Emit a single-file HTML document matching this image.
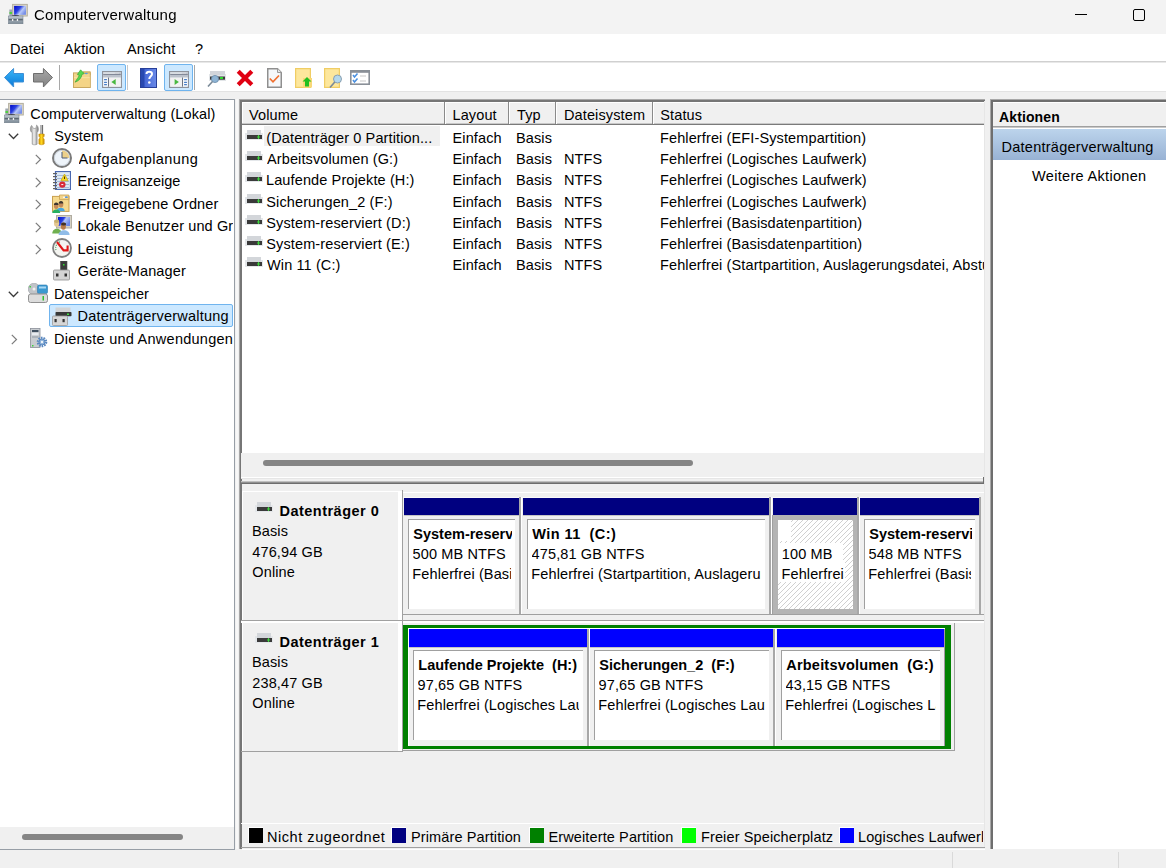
<!DOCTYPE html>
<html><head><meta charset="utf-8"><style>
html,body{margin:0;padding:0;}
body{width:1166px;height:868px;position:relative;overflow:hidden;background:#f0f0f0;font-family:"Liberation Sans",sans-serif;color:#000;}
.t{position:absolute;white-space:pre;letter-spacing:0.12px;}
.r{position:absolute;}
svg{position:absolute;}
</style></head><body>
<div class="r" style="left:0px;top:0px;width:1166px;height:34px;background:#f3f3f3;"></div>
<svg style="left:6px;top:2px" width="22" height="22" viewBox="0 0 22 22"><defs><linearGradient id="cmt" x1="0" y1="0" x2="1" y2="0.6"><stop offset="0" stop-color="#0008c8"/><stop offset="0.45" stop-color="#2a40e0"/><stop offset="0.7" stop-color="#b8c8f8"/><stop offset="1" stop-color="#7890e8"/></linearGradient><linearGradient id="cbt" x1="0" y1="0" x2="0" y2="1"><stop offset="0" stop-color="#c4ccd4"/><stop offset="1" stop-color="#7c8a96"/></linearGradient></defs><rect x="6.6" y="2.4" width="14.7" height="11.6" fill="#dcd8c8" stroke="#b4b0a0" stroke-width="1"/><rect x="8.1" y="3.9" width="11.9" height="8.9" fill="url(#cmt)"/><rect x="3.3" y="7.5" width="2.8" height="6.5" fill="#a0a8b0"/><rect x="3.5" y="10" width="2.5" height="2" fill="#50d040"/><ellipse cx="9.5" cy="13.8" rx="3.6" ry="0.9" fill="#383848"/><rect x="2.4" y="14" width="14.6" height="7.8" fill="url(#cbt)" stroke="#6e7a86" stroke-width="0.5"/><rect x="2.6" y="16.8" width="14.2" height="1.6" fill="#5c6872"/><rect x="6" y="17" width="1.3" height="2" fill="#f0f0f0"/><rect x="10.8" y="17" width="1.3" height="2" fill="#f0f0f0"/></svg>
<div class="t" style="left:34.3px;top:5.04px;font-size:15px;line-height:20px;will-change:transform;letter-spacing:0.24px;">Computerverwaltung</div>
<div class="r" style="left:1075px;top:14px;width:12px;height:1px;background:#000;"></div>
<div class="r" style="left:1133px;top:9px;width:10px;height:10px;border:1px solid #000;border-radius:2px"></div>
<div class="r" style="left:0px;top:34px;width:1166px;height:27px;background:#fff;"></div>
<div class="t" style="left:10px;top:39.21px;font-size:14.5px;line-height:20px;">Datei</div>
<div class="t" style="left:64px;top:39.21px;font-size:14.5px;line-height:20px;">Aktion</div>
<div class="t" style="left:127px;top:39.21px;font-size:14.5px;line-height:20px;">Ansicht</div>
<div class="t" style="left:195px;top:39.21px;font-size:14.5px;line-height:20px;">?</div>
<div class="r" style="left:0px;top:61px;width:1166px;height:1px;background:#d0d0d0;"></div>
<div class="r" style="left:0px;top:62px;width:1166px;height:1px;background:#e8e8e8;"></div>
<div class="r" style="left:0px;top:63px;width:1166px;height:28px;background:#fff;"></div>
<div class="r" style="left:0px;top:91px;width:1166px;height:1px;background:#e3e3e3;"></div>
<div class="r" style="left:0px;top:92px;width:1166px;height:7px;background:#f0f0f0;"></div>
<div class="r" style="left:59px;top:65px;width:1px;height:25px;background:#a8a8a8;"></div>
<div class="r" style="left:127px;top:65px;width:1px;height:25px;background:#c8c8c8;"></div>
<div class="r" style="left:194px;top:65px;width:1px;height:25px;background:#a8a8a8;"></div>
<div class="r" style="left:97px;top:64px;width:27px;height:25px;background:#cce8ff;border:1px solid #6fb4ee;border-radius:2px"></div>
<div class="r" style="left:164px;top:64px;width:27px;height:25px;background:#cce8ff;border:1px solid #6fb4ee;border-radius:2px"></div>
<svg style="left:4px;top:68px" width="20" height="20" viewBox="0 0 20 20"><defs><linearGradient id="ba" x1="0" y1="0" x2="0" y2="1"><stop offset="0" stop-color="#3cb8f8"/><stop offset="1" stop-color="#0a78d8"/></linearGradient></defs><path d="M0.5 9.5 L9.6 0.5 L9.6 5.5 L19.5 5.5 L19.5 14 L9.6 14 L9.6 19 Z" fill="url(#ba)" stroke="#3d8fd6" stroke-width="1"/></svg>
<svg style="left:33px;top:68px" width="20" height="20" viewBox="0 0 20 20"><defs><linearGradient id="fa" x1="0" y1="0" x2="0" y2="1"><stop offset="0" stop-color="#a8a8a8"/><stop offset="1" stop-color="#828282"/></linearGradient></defs><path d="M19.5 9.5 L10.4 0.5 L10.4 5.5 L0.5 5.5 L0.5 14 L10.4 14 L10.4 19 Z" fill="url(#fa)" stroke="#6e6e6e" stroke-width="1"/></svg>
<svg style="left:73px;top:68px" width="18" height="20" viewBox="0 0 18 20"><path d="M10 3.7 H17.3 V7 H10 Z" fill="#f2d58e" stroke="#c9a55a" stroke-width="0.8"/><rect x="0.5" y="4.9" width="16.8" height="14.6" fill="#f3d58c" stroke="#c9a860" stroke-width="1"/><rect x="1" y="9.3" width="15.8" height="1" fill="#fbe6a8"/><rect x="1" y="10.3" width="15.8" height="8.7" fill="#f4d486"/><ellipse cx="13.3" cy="5.5" rx="1.6" ry="0.8" fill="#5a9ee0"/><path d="M2 14.2 C3.5 11.5 5.5 9.5 6.2 7.2 L4.3 6.6 L7.6 1.8 L11.2 5.6 L9 6.4 C8.5 10 6 12.8 2 14.2 Z" fill="#58d850" stroke="#30a030" stroke-width="0.6"/></svg>
<svg style="left:102px;top:71px" width="20" height="17" viewBox="0 0 20 17"><rect x="0.6" y="0.6" width="18.8" height="15.8" fill="#e4e8ee" stroke="#8e939c" stroke-width="1.2"/><rect x="1.2" y="1.2" width="17.6" height="5.4" fill="#c8ccd4"/><rect x="1.4" y="1.7" width="11.5" height="1.1" fill="#eef0f4"/><rect x="13.5" y="1.7" width="1" height="1.1" fill="#f0f0f0"/><rect x="15.5" y="1.7" width="1" height="1.1" fill="#f0f0f0"/><rect x="1.2" y="2.9" width="17.6" height="0.9" fill="#6a7282"/><rect x="1.2" y="3.9" width="17.6" height="2.5" fill="#bcc2cc"/><rect x="1.2" y="6.6" width="4.8" height="9" fill="#f6f8fa"/><rect x="6" y="6.6" width="1" height="9" fill="#6d7584"/><rect x="7" y="6.6" width="11.8" height="9" fill="#f2f2f2"/><rect x="2" y="8.1" width="3" height="1.1" rx="0.5" fill="#4a7fc8"/><rect x="2" y="10.8" width="3" height="1.1" rx="0.5" fill="#4a7fc8"/><rect x="2" y="13.1" width="3" height="1.1" rx="0.5" fill="#4a7fc8"/><path d="M9.4 11 L13.7 8 L13.7 14 Z" fill="#48b840"/></svg>
<svg style="left:140px;top:68px" width="17" height="20" viewBox="0 0 17 20"><defs><linearGradient id="hb" x1="0" y1="0" x2="1" y2="0"><stop offset="0" stop-color="#3a5cd0"/><stop offset="1" stop-color="#6a8ae8"/></linearGradient></defs><rect x="0.5" y="0.5" width="16" height="19" fill="url(#hb)" stroke="#28409a" stroke-width="1"/><rect x="1" y="1" width="3.5" height="18" fill="#2848b0"/><path d="M6.5 6 C6.5 3 12 3 12 6 C12 8 9.3 8.5 9.3 11" fill="none" stroke="#fff" stroke-width="2"/><circle cx="9.3" cy="14.5" r="1.3" fill="#fff"/></svg>
<svg style="left:169px;top:71px" width="20" height="17" viewBox="0 0 20 17"><rect x="0.6" y="0.6" width="18.8" height="15.8" fill="#e4e8ee" stroke="#8e939c" stroke-width="1.2"/><rect x="1.2" y="1.2" width="17.6" height="5.4" fill="#c8ccd4"/><rect x="1.4" y="1.7" width="11.5" height="1.1" fill="#eef0f4"/><rect x="13.5" y="1.7" width="1" height="1.1" fill="#f0f0f0"/><rect x="15.5" y="1.7" width="1" height="1.1" fill="#f0f0f0"/><rect x="1.2" y="2.9" width="17.6" height="0.9" fill="#6a7282"/><rect x="1.2" y="3.9" width="17.6" height="2.5" fill="#bcc2cc"/><rect x="14" y="6.6" width="4.8" height="9" fill="#f6f8fa"/><rect x="13" y="6.6" width="1" height="9" fill="#6d7584"/><rect x="1.2" y="6.6" width="11.8" height="9" fill="#f2f2f2"/><rect x="15" y="8.1" width="3" height="1.1" rx="0.5" fill="#4a7fc8"/><rect x="15" y="10.8" width="3" height="1.1" rx="0.5" fill="#4a7fc8"/><rect x="15" y="13.1" width="3" height="1.1" rx="0.5" fill="#4a7fc8"/><path d="M5.6 8 L9.9 11 L5.6 14 Z" fill="#48b840"/></svg>
<svg style="left:207px;top:71px" width="19" height="17" viewBox="0 0 19 17"><rect x="2" y="3" width="17" height="7" fill="#e2e5e8"/><rect x="3" y="0" width="15" height="4" fill="#d2d5da"/><rect x="3" y="5.5" width="15" height="3.2" fill="#3a3a3a"/><rect x="13" y="6" width="3" height="2" fill="#30d830"/><circle cx="8" cy="8" r="3.6" fill="#8eb4d4" stroke="#6a8aa8" stroke-width="0.8"/><path d="M5.5 10.5 L1 15.5" stroke="#7a8a98" stroke-width="1.6"/></svg>
<svg style="left:236.3px;top:68.6px" width="18" height="18" viewBox="0 0 18 18"><path d="M2.2 2.2 L15.8 15.8 M15.8 2.2 L2.2 15.8" stroke="#e00012" stroke-width="4.2"/></svg>
<svg style="left:267px;top:68px" width="15" height="20" viewBox="0 0 15 20"><path d="M0.75 0.75 H10.5 L14.25 4.5 V19.25 H0.75 Z" fill="#f6f8fa" stroke="#8f8f8f" stroke-width="1.5"/><path d="M10.5 0.75 V4.5 H14.25" fill="#e8e8e8" stroke="#9a9a9a" stroke-width="1"/><path d="M2.8 10.5 L6 13.8 L12 7.5" fill="none" stroke="#f07030" stroke-width="1.7"/></svg>
<svg style="left:295px;top:68px" width="17" height="20" viewBox="0 0 17 20"><rect x="0.6" y="0.6" width="14.8" height="18.8" fill="#fde79c" stroke="#f0cd64" stroke-width="1.2"/><rect x="8" y="10" width="9" height="9.5" fill="#f8d878"/><path d="M7.5 13.5 L12 9 L16.5 13.5 L14 13.5 L14 18.5 L10 18.5 L10 13.5 Z" fill="#20c020"/></svg>
<svg style="left:324px;top:68px" width="18" height="20" viewBox="0 0 18 20"><rect x="0.6" y="0.6" width="14.8" height="18.8" fill="#fde79c" stroke="#f0cd64" stroke-width="1.2"/><circle cx="13.5" cy="11" r="4" fill="#b4d8ec" stroke="#8aa0b0" stroke-width="1"/><path d="M10.8 14 L6 19.5" stroke="#7a8a98" stroke-width="1.6"/></svg>
<svg style="left:350px;top:70px" width="20" height="15" viewBox="0 0 20 15"><rect x="0.8" y="0.8" width="18.4" height="13.4" fill="#fff" stroke="#8a9098" stroke-width="1.6"/><rect x="0.8" y="0.8" width="18.4" height="2" fill="#8a9098"/><path d="M3 5 L4.5 7 L7.5 3.5" fill="none" stroke="#4a90e0" stroke-width="1.6"/><path d="M3 10 L4.5 12 L7.5 8.5" fill="none" stroke="#4a90e0" stroke-width="1.6"/><rect x="10" y="5.5" width="6" height="1" fill="#c8c8c8"/><rect x="10" y="10.5" width="6" height="1" fill="#c8c8c8"/></svg>
<div class="r" style="left:0px;top:99px;width:235px;height:751px;background:#979ea6;"></div>
<div class="r" style="left:0px;top:100px;width:234px;height:749px;background:#fff;"></div>
<div class="r" style="left:0px;top:827px;width:234px;height:22px;background:#f0f0f0;"></div>
<div class="r" style="left:22px;top:834px;width:161px;height:6px;background:#858585;border-radius:3px"></div>
<div class="r" style="left:49px;top:304px;width:182px;height:21px;background:#cce8ff;border:1px solid #70b4ee;border-radius:2px"></div>
<div class="t" style="left:30.3px;top:103.71px;font-size:14.5px;line-height:20px;width:202.7px;overflow:hidden;">Computerverwaltung (Lokal)</div>
<div class="t" style="left:54.3px;top:126.21px;font-size:14.5px;line-height:20px;width:178.7px;overflow:hidden;">System</div>
<div class="t" style="left:78.5px;top:148.71px;font-size:14.5px;line-height:20px;width:154.5px;overflow:hidden;letter-spacing:0.4px;">Aufgabenplanung</div>
<div class="t" style="left:77.5px;top:171.21px;font-size:14.5px;line-height:20px;width:155.5px;overflow:hidden;letter-spacing:-0.02px;">Ereignisanzeige</div>
<div class="t" style="left:77.5px;top:193.71px;font-size:14.5px;line-height:20px;width:155.5px;overflow:hidden;">Freigegebene Ordner</div>
<div class="t" style="left:77.5px;top:216.21px;font-size:14.5px;line-height:20px;width:155.5px;overflow:hidden;">Lokale Benutzer und Gruppen</div>
<div class="t" style="left:77.5px;top:238.71px;font-size:14.5px;line-height:20px;width:155.5px;overflow:hidden;">Leistung</div>
<div class="t" style="left:77.8px;top:261.21px;font-size:14.5px;line-height:20px;width:155.2px;overflow:hidden;">Geräte-Manager</div>
<div class="t" style="left:54px;top:283.71px;font-size:14.5px;line-height:20px;width:179px;overflow:hidden;">Datenspeicher</div>
<div class="t" style="left:77.5px;top:306.21px;font-size:14.5px;line-height:20px;width:155.5px;overflow:hidden;letter-spacing:0.22px;">Datenträgerverwaltung</div>
<div class="t" style="left:54px;top:328.71px;font-size:14.5px;line-height:20px;width:179px;overflow:hidden;letter-spacing:0.25px;">Dienste und Anwendungen</div>
<svg style="left:2px;top:101px" width="22" height="22" viewBox="0 0 22 22"><defs><linearGradient id="cmr" x1="0" y1="0" x2="1" y2="0.6"><stop offset="0" stop-color="#0008c8"/><stop offset="0.45" stop-color="#2a40e0"/><stop offset="0.7" stop-color="#b8c8f8"/><stop offset="1" stop-color="#7890e8"/></linearGradient><linearGradient id="cbr" x1="0" y1="0" x2="0" y2="1"><stop offset="0" stop-color="#c4ccd4"/><stop offset="1" stop-color="#7c8a96"/></linearGradient></defs><rect x="6.6" y="2.4" width="14.7" height="11.6" fill="#dcd8c8" stroke="#b4b0a0" stroke-width="1"/><rect x="8.1" y="3.9" width="11.9" height="8.9" fill="url(#cmr)"/><rect x="3.3" y="7.5" width="2.8" height="6.5" fill="#a0a8b0"/><rect x="3.5" y="10" width="2.5" height="2" fill="#50d040"/><ellipse cx="9.5" cy="13.8" rx="3.6" ry="0.9" fill="#383848"/><rect x="2.4" y="14" width="14.6" height="7.8" fill="url(#cbr)" stroke="#6e7a86" stroke-width="0.5"/><rect x="2.6" y="16.8" width="14.2" height="1.6" fill="#5c6872"/><rect x="6" y="17" width="1.3" height="2" fill="#f0f0f0"/><rect x="10.8" y="17" width="1.3" height="2" fill="#f0f0f0"/></svg>
<svg style="left:28px;top:123px" width="18" height="23" viewBox="0 0 18 23"><defs><linearGradient id="wr" x1="0" y1="0" x2="1" y2="0"><stop offset="0" stop-color="#8a8a8a"/><stop offset="0.45" stop-color="#f0f0f0"/><stop offset="1" stop-color="#7a7a7a"/></linearGradient><linearGradient id="sd" x1="0" y1="0" x2="1" y2="0"><stop offset="0" stop-color="#d89800"/><stop offset="0.5" stop-color="#ffd820"/><stop offset="1" stop-color="#c88800"/></linearGradient></defs><path d="M4.2 21.2 V9.6 C2 8.6 1.8 4.5 3.6 2.4 L5.6 5.6 L8 5.2 L8.6 2 C10.8 3.6 11 8 9.1 9.6 V21.2 C8 22 5.3 22 4.2 21.2 Z" fill="url(#wr)" stroke="#8c8c8c" stroke-width="0.6"/><rect x="12.5" y="2" width="2.6" height="9" fill="#6e6e6e"/><rect x="13" y="2" width="1" height="9" fill="#b8b8b8"/><path d="M10.9 11 H16.2 V13.3 L15 14.8 L16.2 16.2 V21 C15 22 12 22 10.9 21 V16.2 L12 14.8 L10.9 13.3 Z" fill="url(#sd)" stroke="#c08800" stroke-width="0.5"/></svg>
<svg style="left:52px;top:148px" width="20" height="20" viewBox="0 0 20 20"><circle cx="10" cy="10" r="9" fill="#dfe8f0" stroke="#7a7a7a" stroke-width="2"/><circle cx="10" cy="10" r="7.6" fill="#eef4fa" stroke="#c4ccd4" stroke-width="0.7"/><path d="M10 10 V2.6 A7.4 7.4 0 0 1 17.4 10 Z" fill="#ecd08a"/><path d="M10 4 V10 H15.5" fill="none" stroke="#4a5a78" stroke-width="1"/></svg>
<svg style="left:53px;top:171px" width="18" height="19" viewBox="0 0 18 19"><rect x="2.5" y="0.5" width="15" height="18" fill="#dce8f4" stroke="#4a68b0" stroke-width="1.2"/><rect x="4" y="4" width="12" height="0.8" fill="#9ab0d0"/><rect x="4" y="7" width="12" height="0.8" fill="#9ab0d0"/><rect x="4" y="10" width="12" height="0.8" fill="#9ab0d0"/><rect x="4" y="13" width="12" height="0.8" fill="#9ab0d0"/><rect x="4" y="16" width="12" height="0.8" fill="#9ab0d0"/><rect x="0" y="2" width="4" height="1.2" fill="#606060"/><rect x="0" y="5" width="4" height="1.2" fill="#606060"/><rect x="0" y="8" width="4" height="1.2" fill="#606060"/><rect x="0" y="11" width="4" height="1.2" fill="#606060"/><rect x="0" y="14" width="4" height="1.2" fill="#606060"/><rect x="0" y="17" width="4" height="1.2" fill="#606060"/><path d="M11.5 3 L15.2 9.8 H7.8 Z" fill="#f4d820" stroke="#c0a000" stroke-width="0.6"/><rect x="11" y="5.5" width="1" height="2.5" fill="#503000"/><circle cx="9.3" cy="13.6" r="3.2" fill="#d82838"/><rect x="8.3" y="13.1" width="2" height="1" fill="#fff"/></svg>
<svg style="left:52px;top:194px" width="18" height="19" viewBox="0 0 18 19"><rect x="0.5" y="2.4" width="16.5" height="15" fill="#f6da8e" stroke="#c8a050" stroke-width="1"/><path d="M7.5 1 H16.8 V5.6 H7.5 Z" fill="#f2d48a" stroke="#c8a050" stroke-width="0.8"/><ellipse cx="14.4" cy="3.2" rx="1.5" ry="0.9" fill="#5a98e0"/><ellipse cx="12" cy="3.2" rx="1" ry="0.7" fill="#fff"/><path d="M4.6 17.2 C4.6 12.6 12.8 12.6 12.8 17.2 Z" fill="#48a8e0"/><ellipse cx="9" cy="10.4" rx="2.3" ry="3" fill="#c48a58"/><path d="M6.7 9.6 A2.3 2.6 0 0 1 11.3 9.6 Z" fill="#3c3630"/><path d="M0.2 19 C0.2 14.2 8.2 14.2 8.2 19 Z" fill="#28b060"/><ellipse cx="4.2" cy="11.9" rx="2.3" ry="3" fill="#c48a58"/><path d="M1.9 11.1 A2.3 2.6 0 0 1 6.5 11.1 Z" fill="#3c3630"/></svg>
<svg style="left:52px;top:215px" width="20" height="20" viewBox="0 0 20 20"><rect x="4.5" y="0.5" width="15" height="12.5" fill="#d4d0c4" stroke="#b0aca0" stroke-width="1"/><defs><linearGradient id="us" x1="0" y1="0" x2="1" y2="0.5"><stop offset="0" stop-color="#0010d0"/><stop offset="0.45" stop-color="#2a40e0"/><stop offset="0.6" stop-color="#b8c8f8"/><stop offset="1" stop-color="#6a88e8"/></linearGradient></defs><rect x="6" y="2" width="12" height="9" fill="url(#us)"/><path d="M0.3 18.5 C0.3 12.2 9.6 12.2 9.6 18.5 Z" fill="#70b050"/><ellipse cx="4.6" cy="8.2" rx="2.6" ry="3.6" fill="#e4c894"/><ellipse cx="4.6" cy="6.2" rx="2.6" ry="1.8" fill="#c8b070"/><path d="M6.6 20 C6.6 13.6 17.6 13.6 17.6 20 Z" fill="#90bce8"/><ellipse cx="11.4" cy="11.2" rx="2.5" ry="3.6" fill="#b87a48"/><ellipse cx="11.6" cy="9" rx="2.6" ry="1.6" fill="#403028"/></svg>
<svg style="left:52px;top:238px" width="20" height="20" viewBox="0 0 20 20"><circle cx="10" cy="10" r="9" fill="#f4f4f0" stroke="#808080" stroke-width="1.8"/><path d="M4 12 A6.5 6.5 0 0 1 9 3.6" fill="none" stroke="#40a060" stroke-width="1.2" stroke-dasharray="1 1.2"/><path d="M5 4 L11.6 12.4 L15.6 12.4 L15.6 7.6" fill="none" stroke="#e01818" stroke-width="2.1"/><path d="M11.5 8.5 L13.5 7 L13 9.5 Z" fill="#fff"/></svg>
<svg style="left:53px;top:261px" width="17" height="20" viewBox="0 0 17 20"><rect x="7.5" y="0" width="6.5" height="9.5" fill="#3c3c3c" stroke="#505050" stroke-width="0.6"/><rect x="10" y="3" width="1.5" height="1.5" fill="#30e030"/><rect x="0.5" y="9" width="16" height="10" rx="1" fill="#d4d4d4" stroke="#909090" stroke-width="0.8"/><rect x="3" y="12.5" width="2.5" height="3" fill="#303030"/><rect x="11.5" y="12.5" width="2.5" height="3" fill="#303030"/></svg>
<svg style="left:28px;top:283px" width="20" height="20" viewBox="0 0 20 20"><circle cx="6" cy="6" r="5.8" fill="#c0c4c8" stroke="#9a9ea4" stroke-width="0.6"/><circle cx="6" cy="6" r="1.5" fill="#f0f0f0"/><rect x="1.5" y="3" width="1.5" height="1.5" fill="#40d040"/><rect x="9.5" y="2" width="10" height="8.5" rx="1.5" fill="#3a98d0" stroke="#2a78b0" stroke-width="0.6"/><rect x="11" y="3.5" width="7" height="2" fill="#a8d8f4"/><rect x="0.5" y="11" width="19" height="8.5" rx="2" fill="#dcdcdc" stroke="#909090" stroke-width="1"/><rect x="14.5" y="13" width="1.5" height="4.5" fill="#30c030"/></svg>
<svg style="left:52px;top:307px" width="20" height="19" viewBox="0 0 20 19"><rect x="3.5" y="0.5" width="15" height="5" fill="#d2d4d6"/><rect x="3.5" y="5" width="16" height="4.3" rx="0.8" fill="#383838"/><rect x="15" y="6.5" width="2" height="1.5" fill="#40e040"/><rect x="0.5" y="9" width="15" height="9.5" rx="0.8" fill="#d6d6d6" stroke="#9a9a9a" stroke-width="0.8"/><rect x="2.5" y="12" width="2.2" height="3.2" fill="#353535"/><rect x="10.5" y="12" width="2.2" height="3.2" fill="#353535"/></svg>
<svg style="left:30px;top:328px" width="18" height="20" viewBox="0 0 18 20"><rect x="0.5" y="0.5" width="9.5" height="19" fill="#c8ccd0" stroke="#8a9098" stroke-width="0.8"/><rect x="2" y="2" width="6.5" height="2" fill="#405060"/><rect x="2" y="5" width="6.5" height="2.2" fill="#e8ecf0"/><rect x="2" y="8.5" width="6.5" height="1" fill="#909aa4"/><rect x="2" y="17" width="1.5" height="1.5" fill="#40d040"/><circle cx="12" cy="14" r="4.2" fill="none" stroke="#5a88c0" stroke-width="2.2" stroke-dasharray="1.6 1"/><circle cx="12" cy="14" r="3" fill="#8ab0d8" stroke="#5a88c0" stroke-width="1"/><circle cx="12" cy="14" r="1.2" fill="#f0f4f8"/></svg>
<svg style="left:8px;top:133px" width="11" height="7" viewBox="0 0 11 7"><path d="M0.8 0.8 L5.5 5.5 L10.2 0.8" fill="none" stroke="#3a3a3a" stroke-width="1.3"/></svg>
<svg style="left:8px;top:291px" width="11" height="7" viewBox="0 0 11 7"><path d="M0.8 0.8 L5.5 5.5 L10.2 0.8" fill="none" stroke="#3a3a3a" stroke-width="1.3"/></svg>
<svg style="left:35px;top:154px" width="7" height="11" viewBox="0 0 7 11"><path d="M0.8 0.8 L5.5 5.5 L0.8 10.2" fill="none" stroke="#7c7c7c" stroke-width="1.2"/></svg>
<svg style="left:35px;top:177px" width="7" height="11" viewBox="0 0 7 11"><path d="M0.8 0.8 L5.5 5.5 L0.8 10.2" fill="none" stroke="#7c7c7c" stroke-width="1.2"/></svg>
<svg style="left:35px;top:199px" width="7" height="11" viewBox="0 0 7 11"><path d="M0.8 0.8 L5.5 5.5 L0.8 10.2" fill="none" stroke="#7c7c7c" stroke-width="1.2"/></svg>
<svg style="left:35px;top:222px" width="7" height="11" viewBox="0 0 7 11"><path d="M0.8 0.8 L5.5 5.5 L0.8 10.2" fill="none" stroke="#7c7c7c" stroke-width="1.2"/></svg>
<svg style="left:35px;top:244px" width="7" height="11" viewBox="0 0 7 11"><path d="M0.8 0.8 L5.5 5.5 L0.8 10.2" fill="none" stroke="#7c7c7c" stroke-width="1.2"/></svg>
<svg style="left:11px;top:334px" width="7" height="11" viewBox="0 0 7 11"><path d="M0.8 0.8 L5.5 5.5 L0.8 10.2" fill="none" stroke="#7c7c7c" stroke-width="1.2"/></svg>
<div class="r" style="left:236px;top:99px;width:2px;height:750px;background:#f8f8f8;"></div>
<div class="r" style="left:239px;top:99px;width:746px;height:750px;background:#f0f0f0;"></div>
<div class="r" style="left:239px;top:99px;width:746px;height:1px;background:#a8a8a8;"></div>
<div class="r" style="left:239px;top:99px;width:1px;height:750px;background:#a8a8a8;"></div>
<div class="r" style="left:240px;top:100px;width:745px;height:2px;background:#767676;"></div>
<div class="r" style="left:240px;top:100px;width:2px;height:749px;background:#767676;"></div>
<div class="r" style="left:242px;top:849px;width:743px;height:1px;background:#fff;"></div>
<div class="r" style="left:242px;top:102px;width:742px;height:351px;background:#fff;"></div>
<div class="r" style="left:243px;top:103px;width:741px;height:21px;background:#f0f0f0;"></div>
<div class="r" style="left:242px;top:123px;width:742px;height:1px;background:#c8c8c8;"></div>
<div class="r" style="left:242px;top:124px;width:742px;height:1px;background:#7a7a7a;"></div>
<div class="r" style="left:444px;top:102px;width:1px;height:22px;background:#8a8a8a;"></div>
<div class="r" style="left:445px;top:102px;width:1px;height:22px;background:#fff;"></div>
<div class="r" style="left:508px;top:102px;width:1px;height:22px;background:#8a8a8a;"></div>
<div class="r" style="left:509px;top:102px;width:1px;height:22px;background:#fff;"></div>
<div class="r" style="left:555px;top:102px;width:1px;height:22px;background:#8a8a8a;"></div>
<div class="r" style="left:556px;top:102px;width:1px;height:22px;background:#fff;"></div>
<div class="r" style="left:652px;top:102px;width:1px;height:22px;background:#8a8a8a;"></div>
<div class="r" style="left:653px;top:102px;width:1px;height:22px;background:#fff;"></div>
<div class="t" style="left:249px;top:105.21px;font-size:14.5px;line-height:20px;">Volume</div>
<div class="t" style="left:452.5px;top:105.21px;font-size:14.5px;line-height:20px;">Layout</div>
<div class="t" style="left:517px;top:105.21px;font-size:14.5px;line-height:20px;">Typ</div>
<div class="t" style="left:564px;top:105.21px;font-size:14.5px;line-height:20px;">Dateisystem</div>
<div class="t" style="left:660.3px;top:105.21px;font-size:14.5px;line-height:20px;">Status</div>
<div class="r" style="left:264px;top:126px;width:176px;height:20px;background:#f0f0f0;"></div>
<div class="t" style="left:266.3px;top:127.91px;font-size:14.5px;line-height:20px;width:173.7px;overflow:hidden;">(Datenträger 0 Partition...</div>
<svg style="left:245px;top:130px" width="18" height="11" viewBox="0 0 18 11"><rect x="0" y="3" width="18" height="7" fill="#e4e7ea"/><rect x="2" y="0" width="14" height="5" fill="#d3d6da"/><rect x="2" y="5" width="15" height="4" fill="#3a3a3a"/><rect x="12.5" y="6" width="2" height="2" fill="#30e030"/><rect x="13" y="5" width="1" height="4" fill="#40d040"/></svg>
<div class="t" style="left:452.5px;top:127.91px;font-size:14.5px;line-height:20px;">Einfach</div>
<div class="t" style="left:516px;top:127.91px;font-size:14.5px;line-height:20px;">Basis</div>
<div class="t" style="left:565px;top:127.91px;font-size:14.5px;line-height:20px;"></div>
<div class="t" style="left:660px;top:127.91px;font-size:14.5px;line-height:20px;width:324px;overflow:hidden;">Fehlerfrei (EFI-Systempartition)</div>
<div class="t" style="left:267px;top:149.11px;font-size:14.5px;line-height:20px;width:173px;overflow:hidden;">Arbeitsvolumen (G:)</div>
<svg style="left:245px;top:151px" width="18" height="11" viewBox="0 0 18 11"><rect x="0" y="3" width="18" height="7" fill="#e4e7ea"/><rect x="2" y="0" width="14" height="5" fill="#d3d6da"/><rect x="2" y="5" width="15" height="4" fill="#3a3a3a"/><rect x="12.5" y="6" width="2" height="2" fill="#30e030"/><rect x="13" y="5" width="1" height="4" fill="#40d040"/></svg>
<div class="t" style="left:452.5px;top:149.11px;font-size:14.5px;line-height:20px;">Einfach</div>
<div class="t" style="left:516px;top:149.11px;font-size:14.5px;line-height:20px;">Basis</div>
<div class="t" style="left:564px;top:149.11px;font-size:14.5px;line-height:20px;">NTFS</div>
<div class="t" style="left:660px;top:149.11px;font-size:14.5px;line-height:20px;width:324px;overflow:hidden;">Fehlerfrei (Logisches Laufwerk)</div>
<div class="t" style="left:266px;top:170.31px;font-size:14.5px;line-height:20px;width:174px;overflow:hidden;">Laufende Projekte (H:)</div>
<svg style="left:245px;top:172px" width="18" height="11" viewBox="0 0 18 11"><rect x="0" y="3" width="18" height="7" fill="#e4e7ea"/><rect x="2" y="0" width="14" height="5" fill="#d3d6da"/><rect x="2" y="5" width="15" height="4" fill="#3a3a3a"/><rect x="12.5" y="6" width="2" height="2" fill="#30e030"/><rect x="13" y="5" width="1" height="4" fill="#40d040"/></svg>
<div class="t" style="left:452.5px;top:170.31px;font-size:14.5px;line-height:20px;">Einfach</div>
<div class="t" style="left:516px;top:170.31px;font-size:14.5px;line-height:20px;">Basis</div>
<div class="t" style="left:564px;top:170.31px;font-size:14.5px;line-height:20px;">NTFS</div>
<div class="t" style="left:660px;top:170.31px;font-size:14.5px;line-height:20px;width:324px;overflow:hidden;">Fehlerfrei (Logisches Laufwerk)</div>
<div class="t" style="left:266.3px;top:191.51px;font-size:14.5px;line-height:20px;width:173.7px;overflow:hidden;">Sicherungen_2 (F:)</div>
<svg style="left:245px;top:194px" width="18" height="11" viewBox="0 0 18 11"><rect x="0" y="3" width="18" height="7" fill="#e4e7ea"/><rect x="2" y="0" width="14" height="5" fill="#d3d6da"/><rect x="2" y="5" width="15" height="4" fill="#3a3a3a"/><rect x="12.5" y="6" width="2" height="2" fill="#30e030"/><rect x="13" y="5" width="1" height="4" fill="#40d040"/></svg>
<div class="t" style="left:452.5px;top:191.51px;font-size:14.5px;line-height:20px;">Einfach</div>
<div class="t" style="left:516px;top:191.51px;font-size:14.5px;line-height:20px;">Basis</div>
<div class="t" style="left:564px;top:191.51px;font-size:14.5px;line-height:20px;">NTFS</div>
<div class="t" style="left:660px;top:191.51px;font-size:14.5px;line-height:20px;width:324px;overflow:hidden;">Fehlerfrei (Logisches Laufwerk)</div>
<div class="t" style="left:266.3px;top:212.71px;font-size:14.5px;line-height:20px;width:173.7px;overflow:hidden;">System-reserviert (D:)</div>
<svg style="left:245px;top:215px" width="18" height="11" viewBox="0 0 18 11"><rect x="0" y="3" width="18" height="7" fill="#e4e7ea"/><rect x="2" y="0" width="14" height="5" fill="#d3d6da"/><rect x="2" y="5" width="15" height="4" fill="#3a3a3a"/><rect x="12.5" y="6" width="2" height="2" fill="#30e030"/><rect x="13" y="5" width="1" height="4" fill="#40d040"/></svg>
<div class="t" style="left:452.5px;top:212.71px;font-size:14.5px;line-height:20px;">Einfach</div>
<div class="t" style="left:516px;top:212.71px;font-size:14.5px;line-height:20px;">Basis</div>
<div class="t" style="left:564px;top:212.71px;font-size:14.5px;line-height:20px;">NTFS</div>
<div class="t" style="left:660px;top:212.71px;font-size:14.5px;line-height:20px;width:324px;overflow:hidden;">Fehlerfrei (Basisdatenpartition)</div>
<div class="t" style="left:266.3px;top:233.91px;font-size:14.5px;line-height:20px;width:173.7px;overflow:hidden;">System-reserviert (E:)</div>
<svg style="left:245px;top:236px" width="18" height="11" viewBox="0 0 18 11"><rect x="0" y="3" width="18" height="7" fill="#e4e7ea"/><rect x="2" y="0" width="14" height="5" fill="#d3d6da"/><rect x="2" y="5" width="15" height="4" fill="#3a3a3a"/><rect x="12.5" y="6" width="2" height="2" fill="#30e030"/><rect x="13" y="5" width="1" height="4" fill="#40d040"/></svg>
<div class="t" style="left:452.5px;top:233.91px;font-size:14.5px;line-height:20px;">Einfach</div>
<div class="t" style="left:516px;top:233.91px;font-size:14.5px;line-height:20px;">Basis</div>
<div class="t" style="left:564px;top:233.91px;font-size:14.5px;line-height:20px;">NTFS</div>
<div class="t" style="left:660px;top:233.91px;font-size:14.5px;line-height:20px;width:324px;overflow:hidden;">Fehlerfrei (Basisdatenpartition)</div>
<div class="t" style="left:267px;top:255.11px;font-size:14.5px;line-height:20px;width:173px;overflow:hidden;">Win 11 (C:)</div>
<svg style="left:245px;top:257px" width="18" height="11" viewBox="0 0 18 11"><rect x="0" y="3" width="18" height="7" fill="#e4e7ea"/><rect x="2" y="0" width="14" height="5" fill="#d3d6da"/><rect x="2" y="5" width="15" height="4" fill="#3a3a3a"/><rect x="12.5" y="6" width="2" height="2" fill="#30e030"/><rect x="13" y="5" width="1" height="4" fill="#40d040"/></svg>
<div class="t" style="left:452.5px;top:255.11px;font-size:14.5px;line-height:20px;">Einfach</div>
<div class="t" style="left:516px;top:255.11px;font-size:14.5px;line-height:20px;">Basis</div>
<div class="t" style="left:564px;top:255.11px;font-size:14.5px;line-height:20px;">NTFS</div>
<div class="t" style="left:660px;top:255.11px;font-size:14.5px;line-height:20px;width:324px;overflow:hidden;">Fehlerfrei (Startpartition, Auslagerungsdatei, Absturzabbild, Primäre Partition)</div>
<div class="r" style="left:241px;top:453px;width:744px;height:24px;background:#f0f0f0;"></div>
<div class="r" style="left:263px;top:460px;width:430px;height:6px;background:#858585;border-radius:3px"></div>
<div class="r" style="left:241px;top:477px;width:743px;height:1px;background:#fff;"></div>
<div class="r" style="left:241px;top:478px;width:743px;height:1px;background:#e6e6e6;"></div>
<div class="r" style="left:241px;top:481px;width:743px;height:1px;background:#c0c0c0;"></div>
<div class="r" style="left:241px;top:482px;width:743px;height:1px;background:#909090;"></div>
<div class="r" style="left:241px;top:483px;width:743px;height:1px;background:#6e6e6e;"></div>
<div class="r" style="left:983px;top:477px;width:1px;height:7px;background:#6e6e6e;"></div>
<div class="r" style="left:984px;top:101px;width:1px;height:747px;background:#e6e6e6;"></div>
<div class="r" style="left:242px;top:491px;width:157px;height:1px;background:#fff;"></div>
<div class="r" style="left:242px;top:491px;width:1px;height:129px;background:#fff;"></div>
<div class="r" style="left:398px;top:491px;width:4px;height:129px;background:#fff;"></div>
<div class="r" style="left:402px;top:490px;width:1px;height:130px;background:#a0a0a0;"></div>
<svg style="left:255px;top:502px" width="18" height="11" viewBox="0 0 18 11"><rect x="0" y="3" width="18" height="7" fill="#e4e7ea"/><rect x="2" y="0" width="14" height="5" fill="#d3d6da"/><rect x="2" y="5" width="15" height="4" fill="#3a3a3a"/><rect x="12.5" y="6" width="2" height="2" fill="#30e030"/><rect x="13" y="5" width="1" height="4" fill="#40d040"/></svg>
<div class="t" style="left:279.5px;top:501.41px;font-size:14.5px;line-height:20px;font-weight:bold;letter-spacing:0.48px;">Datenträger 0</div>
<div class="t" style="left:252px;top:521.41px;font-size:14.5px;line-height:20px;">Basis</div>
<div class="t" style="left:252.3px;top:541.71px;font-size:14.5px;line-height:20px;">476,94 GB</div>
<div class="t" style="left:252.3px;top:561.61px;font-size:14.5px;line-height:20px;">Online</div>
<div class="r" style="left:403px;top:492px;width:581px;height:1px;background:#fff;"></div>
<div class="r" style="left:403px;top:497px;width:578px;height:1px;background:#fafafa;"></div>
<div class="r" style="left:404px;top:498px;width:115px;height:17px;background:#000080;"></div>
<div class="r" style="left:404px;top:515px;width:115px;height:1px;background:#c4c4c4;"></div>
<div class="r" style="left:408px;top:519px;width:107px;height:90px;background:#fff;"></div>
<div class="r" style="left:408px;top:519px;width:1px;height:90px;background:#a0a0a0;"></div>
<div class="r" style="left:408px;top:519px;width:107px;height:1px;background:#a0a0a0;"></div>
<div class="t" style="left:413.3px;top:524.21px;font-size:14.5px;line-height:20px;font-weight:bold;width:98.69999999999999px;overflow:hidden;letter-spacing:0px;">System-reserviert (D:)</div>
<div class="t" style="left:412.6px;top:544.01px;font-size:14.5px;line-height:20px;width:98.39999999999998px;overflow:hidden;">500 MB NTFS</div>
<div class="t" style="left:412.3px;top:564.21px;font-size:14.5px;line-height:20px;width:98.69999999999999px;overflow:hidden;">Fehlerfrei (Basisdatenpartition)</div>
<div class="r" style="left:523px;top:498px;width:246px;height:17px;background:#000080;"></div>
<div class="r" style="left:523px;top:515px;width:246px;height:1px;background:#c4c4c4;"></div>
<div class="r" style="left:527px;top:519px;width:238px;height:90px;background:#fff;"></div>
<div class="r" style="left:527px;top:519px;width:1px;height:90px;background:#a0a0a0;"></div>
<div class="r" style="left:527px;top:519px;width:238px;height:1px;background:#a0a0a0;"></div>
<div class="t" style="left:532.3px;top:524.21px;font-size:14.5px;line-height:20px;font-weight:bold;width:229.70000000000005px;overflow:hidden;letter-spacing:0.43px;">Win 11  (C:)</div>
<div class="t" style="left:531.5999999999999px;top:544.01px;font-size:14.5px;line-height:20px;width:229.4000000000001px;overflow:hidden;">475,81 GB NTFS</div>
<div class="t" style="left:531.3px;top:564.21px;font-size:14.5px;line-height:20px;width:229.70000000000005px;overflow:hidden;">Fehlerfrei (Startpartition, Auslagerungsdatei, Absturzabbild)</div>
<div class="r" style="left:860px;top:498px;width:119px;height:17px;background:#000080;"></div>
<div class="r" style="left:860px;top:515px;width:119px;height:1px;background:#c4c4c4;"></div>
<div class="r" style="left:864px;top:519px;width:111px;height:90px;background:#fff;"></div>
<div class="r" style="left:864px;top:519px;width:1px;height:90px;background:#a0a0a0;"></div>
<div class="r" style="left:864px;top:519px;width:111px;height:1px;background:#a0a0a0;"></div>
<div class="t" style="left:869.3px;top:524.21px;font-size:14.5px;line-height:20px;font-weight:bold;width:102.70000000000005px;overflow:hidden;letter-spacing:0px;">System-reserviert (E:)</div>
<div class="t" style="left:868.5999999999999px;top:544.01px;font-size:14.5px;line-height:20px;width:102.40000000000009px;overflow:hidden;">548 MB NTFS</div>
<div class="t" style="left:868.3px;top:564.21px;font-size:14.5px;line-height:20px;width:102.70000000000005px;overflow:hidden;">Fehlerfrei (Basisdatenpartition)</div>
<div class="r" style="left:519px;top:497px;width:2px;height:117px;background:#a8a8a8;"></div>
<div class="r" style="left:521px;top:497px;width:1px;height:117px;background:#fff;"></div>
<div class="r" style="left:769px;top:497px;width:2px;height:117px;background:#a8a8a8;"></div>
<div class="r" style="left:771px;top:497px;width:1px;height:117px;background:#fff;"></div>
<div class="r" style="left:857px;top:497px;width:2px;height:117px;background:#a8a8a8;"></div>
<div class="r" style="left:859px;top:497px;width:1px;height:117px;background:#fff;"></div>
<div class="r" style="left:979px;top:497px;width:2px;height:117px;background:#a8a8a8;"></div>
<div class="r" style="left:773px;top:498px;width:84px;height:17px;background:#000080;"></div>
<div class="r" style="left:773px;top:515px;width:84px;height:1px;background:#c4c4c4;"></div>
<div class="r" style="left:772px;top:515px;width:85px;height:99px;background:#b4b4b4;"></div>
<div class="r" style="left:772px;top:515px;width:1px;height:99px;background:#a0a0a0;"></div>
<div class="r" style="left:778px;top:520px;width:75px;height:89px;background:repeating-linear-gradient(135deg,#fff 0,#fff 2.85px,#d0d0d0 2.85px,#d0d0d0 3.54px)"></div>
<div class="r" style="left:778px;top:520px;width:13px;height:21px;background:#fff;"></div>
<div class="r" style="left:778px;top:543px;width:65px;height:19px;background:#fff;"></div>
<div class="r" style="left:778px;top:562px;width:67px;height:20px;background:#fff;"></div>
<div class="t" style="left:781.8px;top:544.01px;font-size:14.5px;line-height:20px;">100 MB</div>
<div class="t" style="left:781.5px;top:563.81px;font-size:14.5px;line-height:20px;">Fehlerfrei</div>
<div class="r" style="left:403px;top:614px;width:581px;height:1px;background:#a0a0a0;"></div>
<div class="r" style="left:241px;top:620px;width:743px;height:1px;background:#a0a0a0;"></div>
<div class="r" style="left:241px;top:621px;width:743px;height:2px;background:#fff;"></div>
<div class="r" style="left:242px;top:622px;width:157px;height:1px;background:#fff;"></div>
<div class="r" style="left:242px;top:622px;width:1px;height:129px;background:#fff;"></div>
<div class="r" style="left:398px;top:622px;width:4px;height:129px;background:#fff;"></div>
<div class="r" style="left:402px;top:621px;width:1px;height:130px;background:#a0a0a0;"></div>
<svg style="left:255px;top:633px" width="18" height="11" viewBox="0 0 18 11"><rect x="0" y="3" width="18" height="7" fill="#e4e7ea"/><rect x="2" y="0" width="14" height="5" fill="#d3d6da"/><rect x="2" y="5" width="15" height="4" fill="#3a3a3a"/><rect x="12.5" y="6" width="2" height="2" fill="#30e030"/><rect x="13" y="5" width="1" height="4" fill="#40d040"/></svg>
<div class="t" style="left:279.5px;top:632.41px;font-size:14.5px;line-height:20px;font-weight:bold;letter-spacing:0.48px;">Datenträger 1</div>
<div class="t" style="left:252px;top:652.41px;font-size:14.5px;line-height:20px;">Basis</div>
<div class="t" style="left:252.3px;top:672.71px;font-size:14.5px;line-height:20px;">238,47 GB</div>
<div class="t" style="left:252.3px;top:692.61px;font-size:14.5px;line-height:20px;">Online</div>
<div class="r" style="left:241px;top:751px;width:162px;height:1px;background:#a0a0a0;"></div>
<div class="r" style="left:954px;top:623px;width:1px;height:128px;background:#a0a0a0;"></div>
<div class="r" style="left:403px;top:750px;width:552px;height:1px;background:#a0a0a0;"></div>
<div class="r" style="left:403px;top:625px;width:548px;height:124px;background:#008000;"></div>
<div class="r" style="left:408px;top:628px;width:537px;height:118px;background:#f0f0f0;"></div>
<div class="r" style="left:408px;top:628px;width:537px;height:1px;background:#fff;"></div>
<div class="r" style="left:408px;top:628px;width:1px;height:118px;background:#fff;"></div>
<div class="r" style="left:409px;top:629px;width:178px;height:18px;background:#0000ff;"></div>
<div class="r" style="left:409px;top:647px;width:178px;height:1px;background:#c4c4c4;"></div>
<div class="r" style="left:413px;top:650px;width:170px;height:90px;background:#fff;"></div>
<div class="r" style="left:413px;top:650px;width:1px;height:90px;background:#a0a0a0;"></div>
<div class="r" style="left:413px;top:650px;width:170px;height:1px;background:#a0a0a0;"></div>
<div class="t" style="left:418.3px;top:655.21px;font-size:14.5px;line-height:20px;font-weight:bold;width:161.7px;overflow:hidden;letter-spacing:0px;">Laufende Projekte  (H:)</div>
<div class="t" style="left:417.6px;top:675.01px;font-size:14.5px;line-height:20px;width:161.39999999999998px;overflow:hidden;">97,65 GB NTFS</div>
<div class="t" style="left:417.3px;top:695.21px;font-size:14.5px;line-height:20px;width:161.7px;overflow:hidden;">Fehlerfrei (Logisches Laufwerk)</div>
<div class="r" style="left:590px;top:629px;width:183px;height:18px;background:#0000ff;"></div>
<div class="r" style="left:590px;top:647px;width:183px;height:1px;background:#c4c4c4;"></div>
<div class="r" style="left:594px;top:650px;width:175px;height:90px;background:#fff;"></div>
<div class="r" style="left:594px;top:650px;width:1px;height:90px;background:#a0a0a0;"></div>
<div class="r" style="left:594px;top:650px;width:175px;height:1px;background:#a0a0a0;"></div>
<div class="t" style="left:599.3px;top:655.21px;font-size:14.5px;line-height:20px;font-weight:bold;width:166.70000000000005px;overflow:hidden;letter-spacing:0px;">Sicherungen_2  (F:)</div>
<div class="t" style="left:598.5999999999999px;top:675.01px;font-size:14.5px;line-height:20px;width:166.4000000000001px;overflow:hidden;">97,65 GB NTFS</div>
<div class="t" style="left:598.3px;top:695.21px;font-size:14.5px;line-height:20px;width:166.70000000000005px;overflow:hidden;">Fehlerfrei (Logisches Laufwerk)</div>
<div class="r" style="left:777px;top:629px;width:167px;height:18px;background:#0000ff;"></div>
<div class="r" style="left:777px;top:647px;width:167px;height:1px;background:#c4c4c4;"></div>
<div class="r" style="left:781px;top:650px;width:159px;height:90px;background:#fff;"></div>
<div class="r" style="left:781px;top:650px;width:1px;height:90px;background:#a0a0a0;"></div>
<div class="r" style="left:781px;top:650px;width:159px;height:1px;background:#a0a0a0;"></div>
<div class="t" style="left:786.3px;top:655.21px;font-size:14.5px;line-height:20px;font-weight:bold;width:150.70000000000005px;overflow:hidden;letter-spacing:0.2px;">Arbeitsvolumen  (G:)</div>
<div class="t" style="left:785.5999999999999px;top:675.01px;font-size:14.5px;line-height:20px;width:150.4000000000001px;overflow:hidden;">43,15 GB NTFS</div>
<div class="t" style="left:785.3px;top:695.21px;font-size:14.5px;line-height:20px;width:150.70000000000005px;overflow:hidden;">Fehlerfrei (Logisches Laufwerk)</div>
<div class="r" style="left:587px;top:629px;width:2px;height:117px;background:#a8a8a8;"></div>
<div class="r" style="left:589px;top:629px;width:1px;height:117px;background:#fff;"></div>
<div class="r" style="left:773px;top:629px;width:2px;height:117px;background:#a8a8a8;"></div>
<div class="r" style="left:775px;top:629px;width:1px;height:117px;background:#fff;"></div>
<div class="r" style="left:944px;top:629px;width:1px;height:117px;background:#a098a0;"></div>
<div class="r" style="left:241px;top:823px;width:743px;height:1px;background:#fff;"></div>
<div class="r" style="left:241px;top:847px;width:744px;height:1px;background:#a0a0a0;"></div>
<div class="r" style="left:248px;top:827px;width:15px;height:16px;background:#fff;"></div>
<div class="r" style="left:249px;top:828px;width:14px;height:15px;background:#000;"></div>
<div class="t" style="left:267px;top:827.21px;font-size:14.5px;line-height:20px;width:716px;overflow:hidden;letter-spacing:0.55px;">Nicht zugeordnet</div>
<div class="r" style="left:391px;top:827px;width:15px;height:16px;background:#fff;"></div>
<div class="r" style="left:392px;top:828px;width:14px;height:15px;background:#000080;"></div>
<div class="t" style="left:411px;top:827.21px;font-size:14.5px;line-height:20px;width:572px;overflow:hidden;">Primäre Partition</div>
<div class="r" style="left:529px;top:827px;width:15px;height:16px;background:#fff;"></div>
<div class="r" style="left:530px;top:828px;width:14px;height:15px;background:#008000;"></div>
<div class="t" style="left:548.5px;top:827.21px;font-size:14.5px;line-height:20px;width:434.5px;overflow:hidden;">Erweiterte Partition</div>
<div class="r" style="left:681px;top:827px;width:15px;height:16px;background:#fff;"></div>
<div class="r" style="left:682px;top:828px;width:14px;height:15px;background:#00ff00;"></div>
<div class="t" style="left:701px;top:827.21px;font-size:14.5px;line-height:20px;width:282px;overflow:hidden;">Freier Speicherplatz</div>
<div class="r" style="left:839px;top:827px;width:15px;height:16px;background:#fff;"></div>
<div class="r" style="left:840px;top:828px;width:14px;height:15px;background:#0000ff;"></div>
<div class="t" style="left:858px;top:827.21px;font-size:14.5px;line-height:20px;width:125px;overflow:hidden;">Logisches Laufwerk</div>
<div class="r" style="left:990px;top:99px;width:176px;height:750px;background:#fff;"></div>
<div class="r" style="left:990px;top:99px;width:176px;height:1px;background:#a8a8a8;"></div>
<div class="r" style="left:990px;top:99px;width:1px;height:750px;background:#a8a8a8;"></div>
<div class="r" style="left:991px;top:100px;width:175px;height:2px;background:#6e6e6e;"></div>
<div class="r" style="left:991px;top:100px;width:2px;height:749px;background:#6e6e6e;"></div>
<div class="r" style="left:993px;top:103px;width:173px;height:23px;background:#f0f0f0;"></div>
<div class="r" style="left:993px;top:126px;width:173px;height:1px;background:#a0a0a0;"></div>
<div class="r" style="left:993px;top:127px;width:173px;height:1px;background:#c8c8c8;"></div>
<div class="t" style="left:999px;top:106.87px;font-size:14px;line-height:20px;font-weight:bold;">Aktionen</div>
<div class="r" style="left:993px;top:129px;width:173px;height:31px;background:linear-gradient(#bcd4ec,#98b2d4);"></div>
<div class="t" style="left:1001.5px;top:136.61px;font-size:14.5px;line-height:20px;width:164.5px;overflow:hidden;letter-spacing:0.26px;">Datenträgerverwaltung</div>
<div class="t" style="left:1032px;top:166.21px;font-size:14.5px;line-height:20px;letter-spacing:0.32px;">Weitere Aktionen</div>
<div class="r" style="left:952px;top:852px;width:1px;height:16px;background:#d9d9d9;"></div>
<div class="r" style="left:1118px;top:852px;width:1px;height:16px;background:#d9d9d9;"></div>
</body></html>
